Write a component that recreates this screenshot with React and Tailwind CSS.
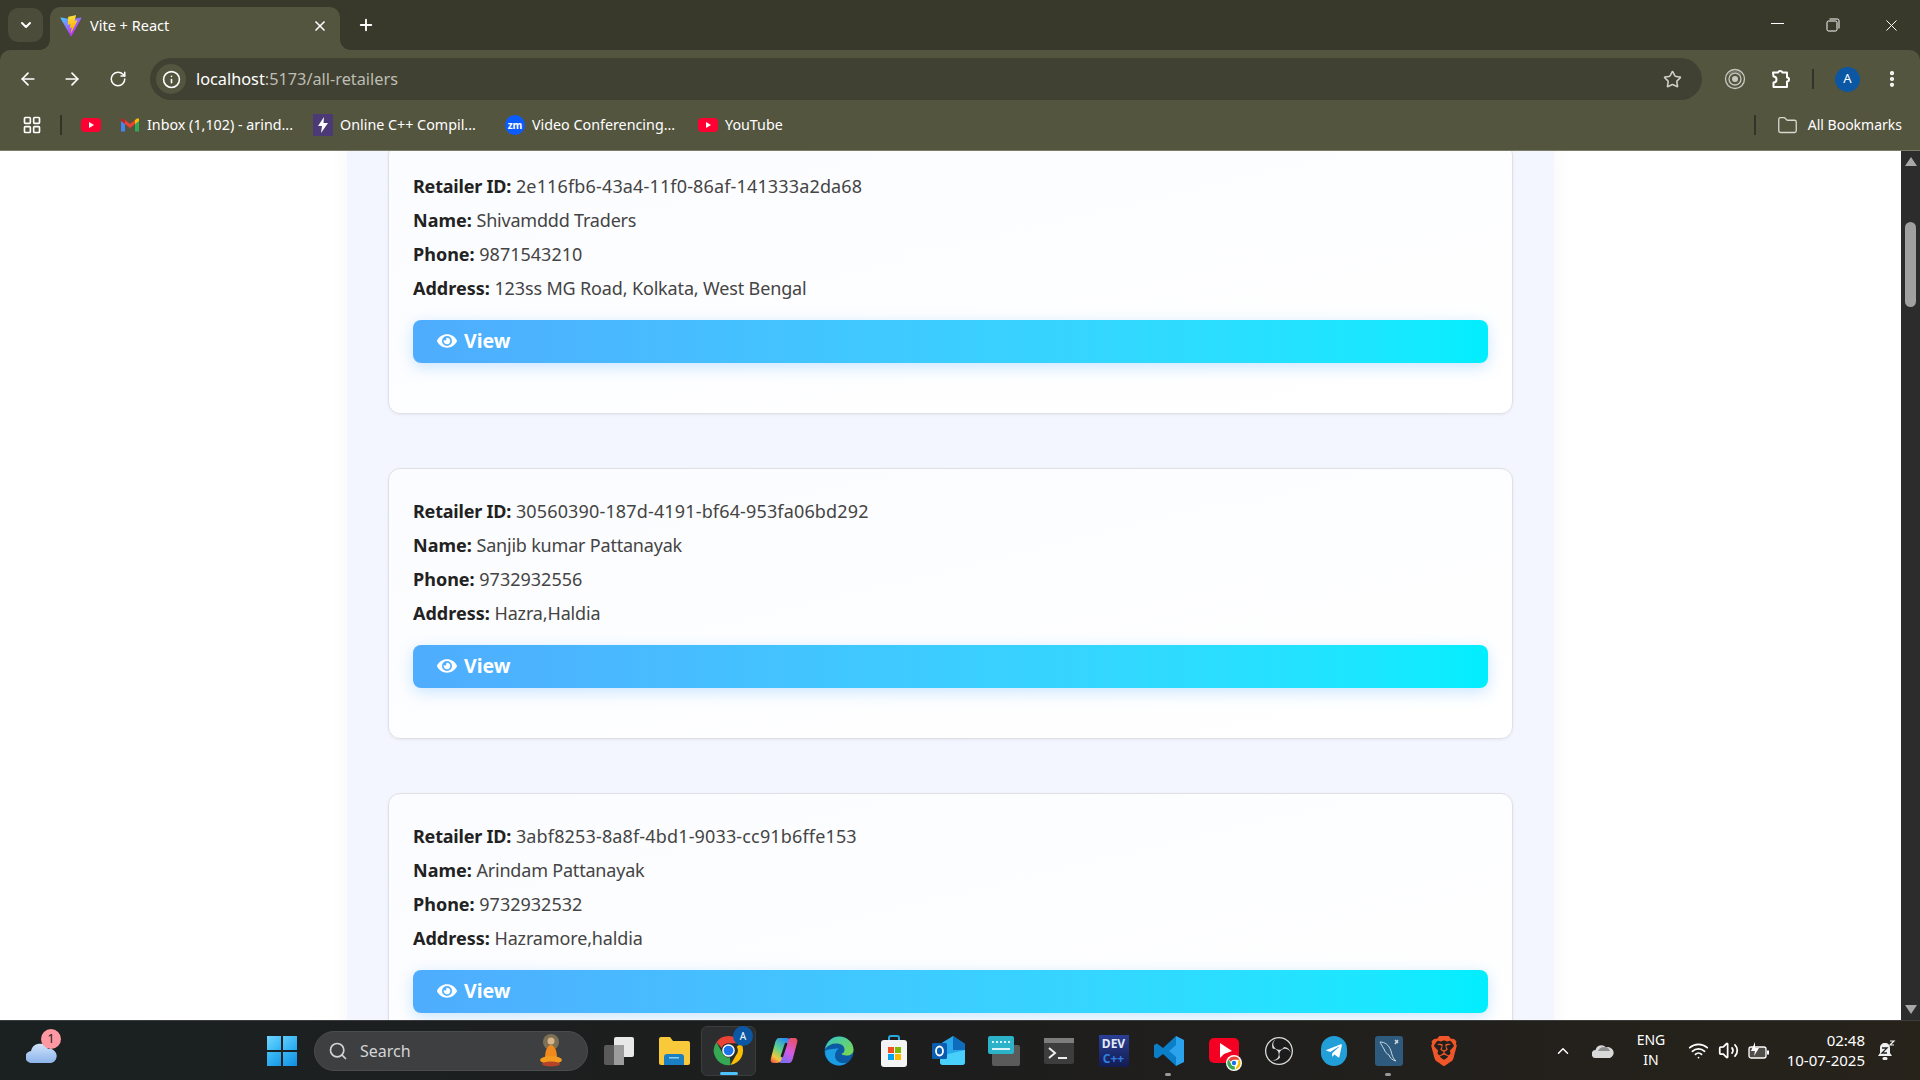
import React from 'react';
import {
    ArrowLeft, ArrowRight, RotateCw, Info, Star, EllipsisVertical, ChevronDown, ChevronUp,
    X, Plus, LayoutGrid, Folder, Search, Wifi, Volume2
} from 'lucide-react';
import { FaEye, FaTelegramPlane } from 'react-icons/fa';
import { SiObsstudio, SiBrave } from 'react-icons/si';

const retailers = [
    { id: '2e116fb6-43a4-11f0-86af-141333a2da68', name: 'Shivamddd Traders', phone: '9871543210', address: '123ss MG Road, Kolkata, West Bengal' },
    { id: '30560390-187d-4191-bf64-953fa06bd292', name: 'Sanjib kumar Pattanayak', phone: '9732932556', address: 'Hazra,Haldia' },
    { id: '3abf8253-8a8f-4bd1-9033-cc91b6ffe153', name: 'Arindam Pattanayak', phone: '9732932532', address: 'Hazramore,haldia' },
];

const ViteLogo = () => (
    <svg width="22" height="22" viewBox="0 0 410 404">
        <defs>
            <linearGradient id="viteA" x1="6" y1="33" x2="235" y2="344" gradientUnits="userSpaceOnUse">
                <stop stopColor="#41D1FF" />
                <stop offset="1" stopColor="#BD34FE" />
            </linearGradient>
            <linearGradient id="viteB" x1="194" y1="8" x2="236" y2="292" gradientUnits="userSpaceOnUse">
                <stop stopColor="#FFEA83" />
                <stop offset="0.08" stopColor="#FFDD35" />
                <stop offset="1" stopColor="#FFA800" />
            </linearGradient>
        </defs>
        <path fill="url(#viteA)" d="M399.641 59.5246L215.643 388.545C211.844 395.338 202.084 395.378 198.228 388.618L10.5817 59.5563C6.38087 52.1896 12.6802 43.2665 21.0281 44.7586L205.223 77.6824C206.398 77.8924 207.601 77.8904 208.776 77.6763L389.119 44.8058C397.439 43.2894 403.768 52.1434 399.641 59.5246Z" />
        <path fill="url(#viteB)" d="M292.965 1.5744L156.801 28.2552C154.563 28.6937 152.906 30.5903 152.771 32.8664L144.395 174.33C144.198 177.662 147.258 180.248 150.51 179.498L188.42 170.749C191.967 169.931 195.172 173.055 194.443 176.622L183.18 231.775C182.422 235.487 185.907 238.661 189.532 237.56L212.947 230.446C216.577 229.344 220.065 232.527 219.297 236.242L201.398 322.875C200.278 328.294 207.486 331.249 210.492 326.603L212.5 323.5L323.454 102.072C325.312 98.3645 322.108 94.137 318.036 94.9228L279.014 102.454C275.347 103.161 272.227 99.746 273.262 96.1583L298.731 7.86689C299.767 4.27314 296.636 0.855181 292.965 1.5744Z" />
    </svg>
);

const YoutubeMark = () => (
    <svg width="20" height="20" viewBox="0 0 20 20">
        <rect x="0" y="3" width="20" height="14" rx="4" fill="#ff0033" />
        <path d="M8 7l5 3-5 3z" fill="#fff" />
    </svg>
);

const GmailMark = () => (
    <svg width="18" height="16" viewBox="0 0 18 16">
        <path d="M0 3v11.5h4V6z" fill="#4285f4" />
        <path d="M18 3v11.5h-4V6z" fill="#34a853" />
        <path d="M0 1.5V4l4 3V4L2 1.5z" fill="#c5221f" />
        <path d="M4 3l5 4 5-4v4l-5 4-5-4z" fill="#ea4335" />
        <path d="M14 3l2-1.5h2V4l-4 3z" fill="#fbbc04" />
    </svg>
);

const ChromeLogo = ({ size = 32 }) => (
    <svg width={size} height={size} viewBox="0 0 32 32">
        <path d="M16 1a15 15 0 0 1 13 7.5H16a7.5 7.5 0 0 0-7 4.8L3.5 7.5A15 15 0 0 1 16 1z" fill="#ea4335" />
        <path d="M29 8.500a15 15 0 0 1-11 22.400l6-10.400a7.500 7.500 0 0 0 .5-8.500z" fill="#fbbc04" />
        <path d="M18 30.900A15 15 0 0 1 3.500 7.500L9.500 18a7.500 7.500 0 0 0 8 5.300z" fill="#34a853" />
        <circle cx="16" cy="16" r="6.500" fill="#fff" />
        <circle cx="16" cy="16" r="5" fill="#1a73e8" />
    </svg>
);

const TargetIcon = () => (
    <svg width="22" height="22" viewBox="0 0 22 22" fill="none">
        <circle cx="11" cy="11" r="9.500" stroke="#c8c8c0" strokeWidth="1.300" />
        <circle cx="11" cy="11" r="6" stroke="#c8c8c0" strokeWidth="1.300" />
        <path d="M5 6.500A7.500 7.500 0 0 1 17 6.500" stroke="#77786a" strokeWidth="1.500" />
        <circle cx="11" cy="11" r="3" fill="#c8c8c0" />
    </svg>
);

const ExtensionIcon = () => (
    <svg width="22" height="22" viewBox="0 0 22 22" fill="none" stroke="#fff" strokeWidth="2" strokeLinejoin="round">
        <path d="M3 4.500h5a2.500 2.500 0 0 1 4.500 0H17v5a2 2 0 0 1 0 4V19H3.500v-4.500a3 3 0 0 0 0-6z" />
    </svg>
);

const RestoreIcon = () => (
    <svg width="14" height="14" viewBox="0 0 14 14" fill="none" stroke="#fff" strokeWidth="1">
        <rect x="1" y="3" width="10" height="10" rx="1.500" />
        <path d="M3.500 1h8a1.500 1.500 0 0 1 1.500 1.500v8" />
    </svg>
);

const TabStrip = () => (
    <div className="h-[50px] flex items-start bg-[#38382b] text-white">
        <div className="ml-2 mt-2 w-[35px] h-[34px] rounded-[10px] bg-[#4b4c39] flex items-center justify-center">
            <ChevronDown size={16} strokeWidth={3} />
        </div>
        <div className="relative ml-[7px] mt-[7px] w-[290px] h-[43px] rounded-t-[10px] bg-[#54553f] flex items-center pl-[10px] pr-3 pb-[6px]">
            <span className="absolute bottom-0 left-[-10px] w-2.5 h-2.5 bg-[radial-gradient(circle_at_0_0,transparent_9.5px,#54553f_10px)]" />
            <span className="absolute bottom-0 right-[-10px] w-2.5 h-2.5 bg-[radial-gradient(circle_at_100%_0,transparent_9.5px,#54553f_10px)]" />
            <ViteLogo />
            <span className="ml-2 text-[14.5px] flex-1">Vite + React</span>
            <X size={16} strokeWidth={2.5} />
        </div>
        <div className="ml-[17px] mt-[16px]">
            <Plus size={18} strokeWidth={2.5} />
        </div>
        <div className="ml-auto flex items-center h-[50px] pr-[19px]">
            <span className="w-[13px] h-px bg-white mr-[42px] mb-1" />
            <span className="mr-[42px]"><RestoreIcon /></span>
            <X size={19} strokeWidth={1.25} />
        </div>
    </div>
);

const Toolbar = () => (
    <div className="h-[58px] flex items-center bg-[#54553f] rounded-t-[10px] text-white">
        <ArrowLeft size={20} className="ml-[18px]" />
        <ArrowRight size={20} className="ml-[24px]" />
        <RotateCw size={18} className="ml-[27px]" />
        <div className="ml-[23px] w-[1552px] h-[42px] rounded-full bg-[#414133] flex items-center pl-[6px] pr-[20px]">
            <span className="w-[30px] h-[30px] rounded-full bg-[#54553f] flex items-center justify-center">
                <Info size={19} />
            </span>
            <span className="ml-[10px] text-[16.3px] flex-1">
                localhost<span className="text-[#bdbdb2]">:5173/all-retailers</span>
            </span>
            <Star size={19} className="text-[#d0d0c8]" />
        </div>
        <span className="ml-[22px]"><TargetIcon /></span>
        <span className="ml-[24px]"><ExtensionIcon /></span>
        <span className="ml-[20px] w-[2px] h-5 bg-[#33332a]" />
        <span className="ml-[21px] w-[25px] h-[25px] rounded-full bg-[#0b57a4] text-[13px] flex items-center justify-center">A</span>
        <EllipsisVertical size={20} strokeWidth={3} className="ml-[22px]" />
    </div>
);

const Bookmark = ({ icon, label, className }) => (
    <div className={`flex items-center text-[14.3px] text-white ${className}`}>
        {icon}
        <span className="ml-[7px] whitespace-nowrap">{label}</span>
    </div>
);

const BookmarksBar = () => (
    <div className="h-[43px] flex items-center bg-[#54553f] border-b border-[#7c7d69] pb-2 text-white">
        <LayoutGrid size={20} className="ml-[22px]" />
        <span className="ml-[18px] w-[2px] h-5 bg-[#33332a]" />
        <Bookmark className="ml-[19px] w-[40px]" icon={<YoutubeMark />} label="" />
        <Bookmark className="w-[192px]" icon={<span className="mr-px flex"><GmailMark /></span>} label="Inbox (1,102) - arind..." />
        <Bookmark
            className="w-[192px]"
            icon={
                <span className="w-5 h-[22px] bg-[#4b3a75] flex items-center justify-center">
                    <svg width="10" height="16" viewBox="0 0 10 16"><path d="M6 0L0 9h4l-1 7 7-10H5.500z" fill="#fff" /></svg>
                </span>
            }
            label="Online C++ Compil..."
        />
        <Bookmark
            className="w-[193px]"
            icon={<span className="w-5 h-5 rounded-full bg-[#0b5cff] text-[10px] font-bold flex items-center justify-center">zm</span>}
            label="Video Conferencing..."
        />
        <Bookmark icon={<YoutubeMark />} label="YouTube" />
        <span className="ml-auto w-[2px] h-5 bg-[#33332a]" />
        <Folder size={21} strokeWidth={1.5} className="ml-[21px] text-[#d8d8d0]" />
        <span className="ml-[10px] mr-[18px] mb-[2px] text-[14px]">All Bookmarks</span>
    </div>
);

const Field = ({ label, value, labelClass, valueClass }) => (
    <p className="h-[34px] leading-[34px] text-[18px] text-[#444]">
        <strong className={`font-bold text-[#222] ${labelClass}`}>{label}:</strong>{' '}
        <span className={valueClass}>{value}</span>
    </p>
);

const RetailerCard = ({ retailer }) => (
    <div className="h-[271px] rounded-xl border border-[#e0e0e4] bg-gradient-to-br from-[#fbfcff] to-white pt-[25px] px-6 shadow-[0_1px_3px_rgba(0,0,0,0.06)]">
        <Field label="Retailer ID" value={retailer.id} labelClass="tracking-[-0.2px]" valueClass="tracking-[0.15px]" />
        <Field label="Name" value={retailer.name} valueClass="tracking-[-0.2px]" />
        <Field label="Phone" value={retailer.phone} />
        <Field label="Address" value={retailer.address} valueClass="tracking-[-0.15px]" />
        <button className="mt-[15px] w-full h-[43px] rounded-lg bg-gradient-to-r from-[#4facfe] to-[#00eeff] flex items-center pl-6 pb-[2px] text-white text-[19.5px] font-bold shadow-[0_4px_15px_rgba(79,172,254,0.3)]">
            <FaEye size={20} />
            <span className="ml-[7px]">View</span>
        </button>
    </div>
);

const Scrollbar = () => (
    <div className="w-[19px] bg-[#2c2c2c] flex flex-col items-center justify-between py-[6px] relative">
        <svg width="12" height="9" viewBox="0 0 12 9"><path d="M6 0l6 9H0z" fill="#a8a8a8" /></svg>
        <span className="absolute top-[71px] left-1 w-[11px] h-[85px] rounded-full bg-[#a0a0a0]" />
        <svg width="12" height="9" viewBox="0 0 12 9"><path d="M6 9l6-9H0z" fill="#a8a8a8" /></svg>
    </div>
);

const Tile = ({ children, dot, active }) => (
    <div className={`relative w-[55px] h-[50px] rounded-md flex items-center justify-center ${active ? 'bg-[#2b2d2e] border border-[#3a3c3d]' : ''}`}>
        {children}
        {dot && <span className="absolute bottom-0 left-[24px] w-[6px] h-[3px] rounded-full bg-[#9a9a9a]" />}
        {active && <span className="absolute bottom-0 left-[18px] w-[18px] h-[3px] rounded-full bg-[#4cc2ff]" />}
    </div>
);

const WindowsLogo = () => (
    <div className="grid grid-cols-2 gap-[2px] w-[30px] h-[30px]">
        <span className="bg-gradient-to-br from-[#6fd6ff] to-[#27b2f5]" />
        <span className="bg-gradient-to-br from-[#5ccdfb] to-[#1ea6ee]" />
        <span className="bg-gradient-to-br from-[#3fc0f8] to-[#1596e6]" />
        <span className="bg-gradient-to-br from-[#37b8f5] to-[#0f8ce0]" />
    </div>
);

const Monk = () => (
    <svg width="28" height="36" viewBox="0 0 28 36">
        <circle cx="14" cy="9" r="8" fill="#f3cf7a" opacity="0.35" />
        <circle cx="14" cy="8" r="3.500" fill="#d9b48a" />
        <path d="M8 25c0-8 3-13 6-13s6 5 6 13z" fill="#f08a1d" />
        <ellipse cx="14" cy="27" rx="11" ry="4" fill="#f39a1f" />
        <ellipse cx="14" cy="31" rx="9" ry="2.500" fill="#b5432a" />
    </svg>
);

const CopilotIcon = () => (
    <svg width="28" height="27" viewBox="0 0 28 27">
        <defs>
            <linearGradient id="copilotA" x1="0.7" y1="0" x2="0.2" y2="1">
                <stop stopColor="#2a8ff0" />
                <stop offset="0.45" stopColor="#5fd38a" />
                <stop offset="0.8" stopColor="#f6c53b" />
                <stop offset="1" stopColor="#f0623f" />
            </linearGradient>
            <linearGradient id="copilotB" x1="0.3" y1="1" x2="0.8" y2="0">
                <stop stopColor="#e8506a" />
                <stop offset="0.5" stopColor="#d45be0" />
                <stop offset="1" stopColor="#7a6cf5" />
            </linearGradient>
        </defs>
        <path d="M9 1h8c2 0 2 1 1 3l-6 17c-1 4-3 5-6 5H4c-3 0-4-2-3-5L5 6c.7-3 2-5 4-5z" fill="url(#copilotB)" transform="rotate(180 14 13.500)" />
        <path d="M9 1h8c2 0 2 1 1 3l-6 17c-1 4-3 5-6 5H4c-3 0-4-2-3-5L5 6c.7-3 2-5 4-5z" fill="url(#copilotA)" />
        <path d="M16 7l-4 12" stroke="#1d1f20" strokeWidth="2.500" strokeLinecap="round" />
    </svg>
);

const VsCodeIcon = () => (
    <svg width="32" height="32" viewBox="0 0 32 32">
        <path d="M23 1L10 13 4 8.500 1 10v12l3 1.500L10 19l13 12 2-8-8-7 8-7z" fill="#0a7fc8" />
        <path fillRule="evenodd" d="M23 1l8 4v22l-8 4zM23 10l-7 6 7 6z" fill="#2aa3ec" />
    </svg>
);

const TaskbarApps = () => (
    <div className="flex items-center">
        <Tile>
            <div className="relative w-[30px] h-[28px]">
                <span className="absolute top-[8px] left-0 w-5 h-5 rounded-[2px] bg-[#5a5a5a]" />
                <span className="absolute top-0 left-[10px] w-5 h-5 rounded-[2px] bg-[#e8e8e8]" />
                <span className="absolute top-[8px] left-[10px] w-[10px] h-5 bg-[#9c9c9c]" />
            </div>
        </Tile>
        <Tile>
            <svg width="32" height="28" viewBox="0 0 32 28">
                <path d="M1 2a2 2 0 0 1 2-2h9l3 4h15a2 2 0 0 1 2 2v20a2 2 0 0 1-2 2H3a2 2 0 0 1-2-2z" fill="#f8c93b" />
                <path d="M6 28v-8a3 3 0 0 1 3-3h14a3 3 0 0 1 3 3v8z" fill="#1b7fc4" />
                <rect x="11" y="20" width="10" height="1.500" fill="#8fd0f5" />
            </svg>
        </Tile>
        <Tile active>
            <div className="relative">
                <ChromeLogo size={31} />
                <span className="absolute top-[-9px] right-[-9px] w-5 h-5 rounded-full bg-[#0b57a4] text-[10px] text-white flex items-center justify-center">A</span>
            </div>
        </Tile>
        <Tile><CopilotIcon /></Tile>
        <Tile>
            <svg width="30" height="30" viewBox="0 0 30 30">
                <defs>
                    <linearGradient id="edgeA" x1="0" y1="0" x2="1" y2="1">
                        <stop stopColor="#36c6c0" />
                        <stop offset="1" stopColor="#7fd84c" />
                    </linearGradient>
                </defs>
                <circle cx="15" cy="15" r="14.500" fill="#0c59a4" />
                <path d="M1 13C3 5 9 .5 15 .5c8 0 14.500 6 14.500 13 0 4-3 6-7 6-3 0-5-1-5-2 2 0 3-2 3-4 0-4-4-6-8-6-5 0-9 2-11.500 5.500z" fill="url(#edgeA)" />
                <path d="M1 15c0 8 6 14.500 14 14.500 3 0 6-1 8-3-6 2-12-1-12-7 0-3 2-6 4-7-6 0-12 1-14 2.500z" fill="#1b9de2" />
            </svg>
        </Tile>
        <Tile>
            <svg width="28" height="32" viewBox="0 0 28 32">
                <path d="M9 6V3a2 2 0 0 1 2-2h6a2 2 0 0 1 2 2v3" fill="none" stroke="#29a8e0" strokeWidth="2" />
                <rect x="1" y="5" width="26" height="27" rx="3" fill="#f4f4f4" />
                <rect x="8" y="12" width="6" height="6" fill="#f25022" />
                <rect x="15" y="12" width="6" height="6" fill="#7fba00" />
                <rect x="8" y="19" width="6" height="6" fill="#00a4ef" />
                <rect x="15" y="19" width="6" height="6" fill="#ffb900" />
            </svg>
        </Tile>
        <Tile>
            <svg width="34" height="30" viewBox="0 0 34 30">
                <path d="M8 8l13-8 12 8v18a3 3 0 0 1-3 3H11a3 3 0 0 1-3-3z" fill="#28a8ea" />
                <path d="M21 0l12 8v6H21z" fill="#0f6cbd" />
                <path d="M8 20l25-6v12a3 3 0 0 1-3 3H11a3 3 0 0 1-3-3z" fill="#50d9ff" opacity="0.8" />
                <rect x="0" y="7" width="15" height="16" rx="1.500" fill="#0a5cb0" />
                <ellipse cx="7.500" cy="15" rx="3.500" ry="4.500" fill="none" stroke="#fff" strokeWidth="1.800" />
            </svg>
        </Tile>
        <Tile>
            <svg width="32" height="30" viewBox="0 0 32 30">
                <rect x="4" y="9" width="28" height="21" rx="2" fill="#5a5a5a" />
                <rect x="0" y="0" width="26" height="18" rx="2" fill="#2cb3c9" />
                <g fill="#d8f4f8">
                    <rect x="4" y="5" width="2" height="2" />
                    <rect x="8" y="5" width="2" height="2" />
                    <rect x="12" y="5" width="2" height="2" />
                    <rect x="16" y="5" width="2" height="2" />
                    <rect x="20" y="5" width="2" height="2" />
                    <rect x="4" y="12" width="18" height="2" />
                </g>
            </svg>
        </Tile>
        <Tile>
            <svg width="30" height="26" viewBox="0 0 30 26">
                <rect width="30" height="26" rx="2" fill="#3d3d3d" />
                <rect width="30" height="5" fill="#7d7d7d" />
                <path d="M5 10l6 5-6 5" fill="none" stroke="#eee" strokeWidth="2" />
                <rect x="14" y="19" width="9" height="2" fill="#eee" />
            </svg>
        </Tile>
        <Tile>
            <div className="w-[30px] h-[32px] bg-gradient-to-b from-[#2a3f96] to-[#131c52] flex flex-col items-center justify-center">
                <span className="h-[15px] leading-[15px] text-[12px] font-bold text-[#e4eaf7]">DEV</span>
                <span className="h-[15px] leading-[15px] text-[12px] font-bold text-[#2f7fe0]">C++</span>
            </div>
        </Tile>
        <Tile dot><VsCodeIcon /></Tile>
        <Tile>
            <div className="relative">
                <svg width="30" height="25" viewBox="0 0 30 25">
                    <rect width="30" height="25" rx="5" fill="#f40022" />
                    <path d="M11 5v15l4-4 8-3z" fill="#fff" />
                </svg>
                <span className="absolute bottom-[-8px] right-[-3px] rounded-full bg-white p-px flex"><ChromeLogo size={14} /></span>
            </div>
        </Tile>
        <Tile>
            <span className="w-7 h-7 rounded-full bg-[#1c1c1c] flex items-center justify-center">
                <SiObsstudio size={28} className="text-[#dcdcdc]" />
            </span>
        </Tile>
        <Tile>
            <span className="w-[26px] h-[30px] rounded-full bg-[#229ed9] flex items-center justify-center">
                <FaTelegramPlane size={18} className="text-white" />
            </span>
        </Tile>
        <Tile dot>
            <span className="w-[28px] h-[30px] rounded-[3px] bg-[#2e5a7d] flex items-center justify-center">
                <svg width="22" height="24" viewBox="0 0 22 24" fill="none" stroke="#c8d6e0" strokeWidth="1">
                    <path d="M2 3c5 0 9 3 11 9 1 4 2 8 5 10-4-1-6-3-7-6-2-1-4-3-5-6C4 7 3 5 2 3z" />
                    <path d="M17 1l3 3M20 1l-3 4" strokeWidth="1.500" />
                </svg>
            </span>
        </Tile>
        <Tile><SiBrave size={30} className="text-[#f1562b]" /></Tile>
    </div>
);

const Tray = () => (
    <div className="ml-auto flex items-center text-white">
        <ChevronUp size={18} strokeWidth={2} />
        <svg className="ml-5" width="22" height="14" viewBox="0 0 22 14">
            <path d="M4 14a4 4 0 0 1-.5-8A6 6 0 0 1 14 3.500 5 5 0 0 1 18 14z" fill="#d8d8d8" />
            <path d="M6 7a6 6 0 0 1 8-3.500A5 5 0 0 1 18 7z" fill="#8c8c8c" />
        </svg>
        <div className="ml-[13px] w-[48px] flex flex-col items-center text-[14px] leading-[20px] mb-[2px]">
            <span>ENG</span>
            <span>IN</span>
        </div>
        <Wifi size={21} className="ml-[13px]" />
        <Volume2 size={21} className="ml-[9px]" />
        <svg className="ml-[9px]" width="22" height="18" viewBox="0 0 22 18" fill="none" stroke="#fff" strokeWidth="1.300">
            <rect x="1" y="5" width="17" height="11" rx="2" fill="#ffffff33" />
            <path d="M20 8.500v4" strokeWidth="2" />
            <path d="M7 0L3 9h4l-1 5 5-8H7z" fill="#fff" stroke="none" />
        </svg>
        <div className="ml-[15px] w-[80px] flex flex-col items-end text-[15px] leading-[20px] mb-[2px]">
            <span>02:48</span>
            <span>10-07-2025</span>
        </div>
        <svg className="ml-[11px] mr-6" width="20" height="22" viewBox="0 0 20 22">
            <path d="M9 3c-3 0-5 2-5 5v5l-2 3h14l-2-3V8c0-3-2-5-5-5z" fill="#f0f0f0" />
            <rect x="6.500" y="17" width="5" height="3" rx="1.500" fill="#f0f0f0" />
            <path d="M6 8h5l-5 5h5" fill="none" stroke="#222" strokeWidth="1.300" />
            <path d="M14 1h4l-4 4h4" fill="none" stroke="#f0f0f0" strokeWidth="1.200" />
        </svg>
    </div>
);

const Taskbar = () => (
    <div className="h-[60px] flex items-center border-t border-[#3c3c3c] bg-gradient-to-r from-[#1b2121] via-[#1d1d1d] to-[#27231b]">
        <div className="relative ml-[26px]">
            <svg width="32" height="24" viewBox="0 0 32 24">
                <defs>
                    <linearGradient id="cloudA" x1="0" y1="0" x2="0" y2="1">
                        <stop stopColor="#cfe3fb" />
                        <stop offset="1" stopColor="#8cb4ea" />
                    </linearGradient>
                </defs>
                <path d="M6 24a6 6 0 0 1-1-12 9 9 0 0 1 17-2 7 7 0 0 1 3 14z" fill="url(#cloudA)" />
            </svg>
            <span className="absolute top-[-10px] left-[15px] w-5 h-5 rounded-full bg-[#ff98a2] text-[13px] text-[#222] flex items-center justify-center">1</span>
        </div>
        <div className="ml-[209px]"><WindowsLogo /></div>
        <div className="ml-[17px] w-[274px] h-[40px] rounded-full bg-[#3d3f41] border border-[#4a4c4e] flex items-center pl-[13px] pr-[22px] text-[16px] text-[#d4d4d4]">
            <Search size={20} />
            <span className="ml-3 flex-1">Search</span>
            <Monk />
        </div>
        <div className="ml-[3px]"><TaskbarApps /></div>
        <Tray />
    </div>
);

export default function App() {
    return (
        <div className="h-screen w-full flex flex-col overflow-hidden bg-white font-['Noto_Sans',sans-serif]">
            <header className="bg-[#38382b]">
                <TabStrip />
                <Toolbar />
                <BookmarksBar />
            </header>
            <div className="flex-1 min-h-0 flex">
                <main className="flex-1 overflow-hidden">
                    <div className="w-[1207px] mx-auto -mt-2 bg-[#f3f6fe] px-[41px] flex flex-col gap-[54px] pb-20 shadow-[0_0_20px_rgba(0,0,0,0.04)]">
                        {retailers.map((retailer) => (
                            <RetailerCard key={retailer.id} retailer={retailer} />
                        ))}
                    </div>
                </main>
                <Scrollbar />
            </div>
            <Taskbar />
        </div>
    );
}
